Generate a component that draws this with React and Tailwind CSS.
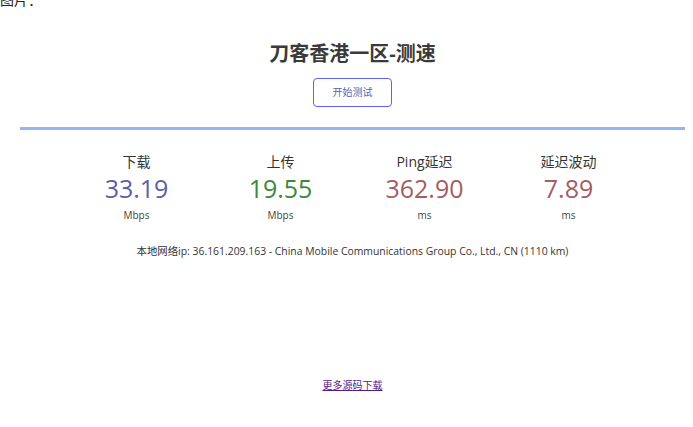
export default function App() {
  const stats = [
    { label: "下载", value: "33.19", unit: "Mbps", color: "text-[#5c5fa8]" },
    { label: "上传", value: "19.55", unit: "Mbps", color: "text-[#3a8a3a]" },
    { label: "Ping延迟", value: "362.90", unit: "ms", color: "text-[#a65c62]" },
    { label: "延迟波动", value: "7.89", unit: "ms", color: "text-[#a65c62]" },
  ];

  return (
    <div className="min-h-screen overflow-hidden bg-white text-[#333] font-['Open_Sans','Noto_Sans_CJK_SC',sans-serif]">
      <p className="-mt-[10px] text-[14px] leading-[20px] text-[#222]">图片：</p>

      <div className="ml-[20px] w-[665px]">
        <h1 className="mt-[30px] text-center text-[20px] font-bold leading-[28px] text-[#3a3a3a]">
          刀客香港一区-测速
        </h1>

        <div className="mt-[10px] flex justify-center">
          <button className="h-[29px] w-[79px] rounded-[4px] border-[1.5px] border-[#6060ff] text-[10px] text-[#6060aa]">
            开始测试
          </button>
        </div>

        <div className="mt-[20px] h-[3px] w-full bg-[#94b6ec]"></div>

        {/* meters */}
        <div className="mx-auto mt-[22px] grid w-[576px] grid-cols-4">
          {stats.map((s) => (
            <div key={s.label} className="flex flex-col items-center">
              <div className="text-[14px] leading-[20px] text-[#333]">{s.label}</div>
              <div className={"text-[25px] font-normal leading-[32px] " + s.color}>{s.value}</div>
              <div className="mt-[4px] text-[10px] leading-[14px] text-[#444]">{s.unit}</div>
            </div>
          ))}
        </div>

        <p className="mt-[22px] text-center text-[10.4px] leading-[14px] text-[#333]">
          本地网络ip: 36.161.209.163 - China Mobile Communications Group Co., Ltd., CN (1110 km)
        </p>

        <div className="mt-[113px] text-center">
          <a href="#" className="text-[10px] leading-[14px] text-[#551a8b] underline">
            更多源码下载
          </a>
        </div>
      </div>
    </div>
  );
}
